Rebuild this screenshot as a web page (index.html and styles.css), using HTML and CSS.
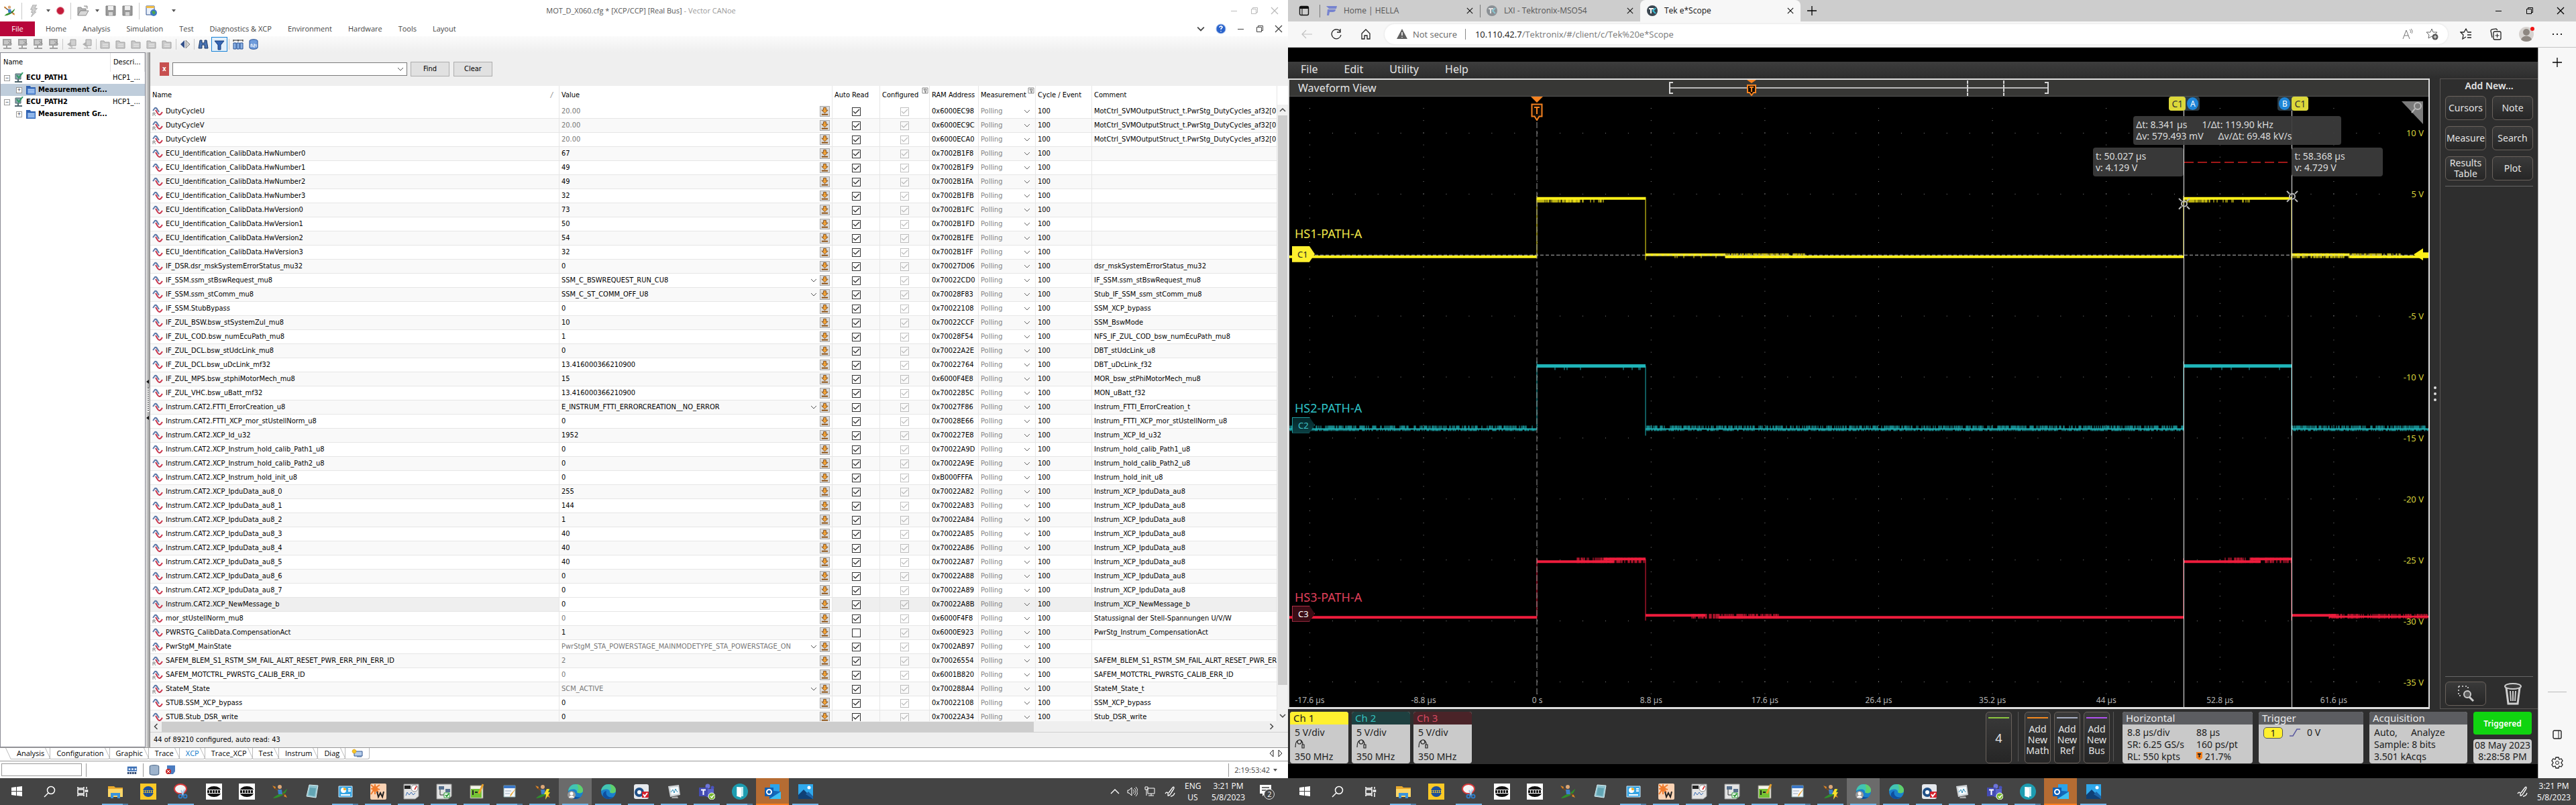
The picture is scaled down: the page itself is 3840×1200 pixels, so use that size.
FILE: index.html
```html
<!DOCTYPE html>
<html lang="en">
<head>
<meta charset="utf-8">
<title>CANoe and e*Scope desktop</title>
<link rel="stylesheet" href="styles.css">
</head>
<body>
<svg class="sprite" aria-hidden="true">
  <symbol id="kayak" viewBox="0 0 24 24"><path d="M2 22c2-3 7-5 11-7 4-1 7-5 10-7-1 5-5 9-10 11-4 2-8 3-11 3z" fill="#2f8f2a"/><path d="M2 5l20 14" stroke="#7a4a1e" stroke-width="2"/><path d="M1 3l5 2-1 3zM23 21l-5-2 2-3z" fill="#e08a2c"/><path d="M9 9h6l1 7h-6z" fill="#3a7fc8"/><circle cx="12" cy="5" r="3" fill="#dca777"/></symbol>
  <symbol id="bolt" viewBox="0 0 16 20"><path d="M6 0h6L9 6h4L8 12h3L3 20l3-7H3l2-5H2z" fill="#cfcfcf" stroke="#a8a8a8"/></symbol>
  <symbol id="open" viewBox="0 0 18 18"><path d="M1 16V4h5l1 2h6v3H5z" fill="#b4b4b4" stroke="#8c8c8c"/><path d="M1 16L5 9h12l-4 7zM10 2h5v4" fill="#d8d8d8" stroke="#8c8c8c"/></symbol>
  <symbol id="floppy" viewBox="0 0 16 16"><path d="M1 1h14v14H1z" fill="#9a9a9a" stroke="#7a7a7a"/><path d="M4 1h8v6H4z" fill="#eee"/><path d="M5 10h6v5H5z" fill="#d4d4d4"/></symbol>
  <symbol id="config" viewBox="0 0 18 18"><path d="M1 2h12v13H1z" fill="#e9f0fa" stroke="#2a4f8e"/><path d="M1 2h12v3H1z" fill="#f1bb44"/><circle cx="12" cy="12" r="5" fill="#3d78c6"/><path d="M9 10l4-1 2 3-3 3z" fill="#4ca74a"/></symbol>
  <symbol id="node" viewBox="0 0 16 16"><path d="M2 1h11v8H2zM7 9v4M2 14h12" fill="#c6c6c6" stroke="#a2a2a2" stroke-width="2"/><path d="M9 8l5-4M9 3l6 5" stroke="#8e8e8e"/></symbol>
  <symbol id="groupg" viewBox="0 0 16 16"><path d="M1 3h5l1 2h7v9H1z" fill="#c9c9c9" stroke="#a0a0a0"/><path d="M4 8h8M4 11h8" stroke="#efefef"/></symbol>
  <symbol id="sheet" viewBox="0 0 16 16"><path d="M6 1h8v9H6zM8 10v4M3 14h11" fill="#d0d0d0" stroke="#a0a0a0"/><path d="M1 8l6-4v8z" fill="#b0b0b0"/></symbol>
  <symbol id="split" viewBox="0 0 16 16"><path d="M7 2v12L1 8z" fill="#33508a"/><path d="M9 2v12l6-6z" fill="#d2d2d2" stroke="#888"/></symbol>
  <symbol id="find" viewBox="0 0 16 16"><path d="M3 2h3v4h4V2h3l2 12h-5V9H6v5H1z" fill="#4a74b4" stroke="#1c3763"/></symbol>
  <symbol id="filter" viewBox="0 0 16 16"><path d="M1 2h14l-5 6v7H6V8z" fill="#3566b4" stroke="#163a78"/></symbol>
  <symbol id="cols" viewBox="0 0 16 16"><path d="M1 1v3M8 1v3M15 1v3M1 2h14" stroke="#222"/><path d="M1 6h4v9H1zM6 6h4v9H6zM11 6h4v9h-4z" fill="#8db4e6" stroke="#244f94"/></symbol>
  <symbol id="a2l" viewBox="0 0 16 16"><path d="M2 3c0-3 12-3 12 0v10c0 3-12 3-12 0z" fill="#6f9cdc" stroke="#244f94"/><path d="M4 12V8h2v4M8 8h2v2H8v2h2M12 8v4" stroke="#fff" fill="none"/></symbol>
  <symbol id="ecu" viewBox="0 0 14 16"><path d="M2 2h8v8H2z" fill="#8aa5ae" stroke="#4d646d"/><path d="M6 10v4M1 14h11" stroke="#4d646d" stroke-width="2"/><path d="M4 4l3 4 6-8" fill="none" stroke="#2f9a63" stroke-width="2"/></symbol>
  <symbol id="folder" viewBox="0 0 14 14"><path d="M0 1h6l1 2h7v11H0z" fill="#2f62b2"/><path d="M2 5h11v8H2z" fill="#6f9ee0"/><path d="M3 7h9M3 10h9" stroke="#d7e6fb"/></symbol>
  <symbol id="wave" viewBox="0 0 16 14"><path d="M1 6l3-4c2-1 3 1 4 3l2 3" fill="none" stroke="#5b78a8" stroke-width="2"/><path d="M5 5l3 5c2 3 4 3 7-2" fill="none" stroke="#c8334a" stroke-width="2"/></symbol>
  <symbol id="waver" viewBox="0 0 16 14"><use href="#wave"/><path d="M1 14V9h2c2 0 2 2 0 2H1M3 11l2 3" fill="none" stroke="#888"/></symbol>
  <symbol id="dl" viewBox="0 0 14 14"><path d="M5 1h4v4h3l-5 5-5-5h3z" fill="#f4a53a" stroke="#7a4512"/><path d="M2 12h10" stroke="#8a4a08" stroke-width="2"/></symbol>
  <symbol id="fmark" viewBox="0 0 10 10"><path d="M1 1h8v8H1z" fill="#fff" stroke="#888"/><path d="M3 3h4L6 6v2H5V6z" fill="none" stroke="#666"/></symbol>
  <symbol id="min" viewBox="0 0 12 12"><path d="M1 6.500h9" stroke="currentColor"/></symbol>
  <symbol id="restore" viewBox="0 0 12 12"><path d="M1.500 3.500h7v7h-7zM3.500 3.500v-2h7v7h-2" fill="none" stroke="currentColor"/></symbol>
  <symbol id="close" viewBox="0 0 12 12"><path d="M1 1l10 10M11 1L1 11" fill="none" stroke="currentColor" stroke-width="1.300"/></symbol>
  <symbol id="chev" viewBox="0 0 10 10"><path d="M1 3l4 4 4-4" fill="none" stroke="currentColor" stroke-width="1.500"/></symbol>
  <symbol id="caret" viewBox="0 0 6 6"><path d="M0 1h6L3 5z" fill="currentColor"/></symbol>
  <symbol id="help" viewBox="0 0 16 16"><circle cx="8" cy="8" r="7" fill="#2a63cc" stroke="#9bb8e8"/><path d="M6 6c0-3 5-2 4 0-1 1-2 1-2 3M8 11v1" fill="none" stroke="#fff" stroke-width="1.600"/></symbol>
  <symbol id="capl" viewBox="0 0 18 14"><path d="M1 1h16v8H1z" fill="#3b6fb5"/><path d="M3 4h3v3H3zM8 4h3v3H8zM13 4h3v3h-3z" fill="#dfeaf8"/><path d="M1 12h16" stroke="#1c3763" stroke-width="3" stroke-dasharray="3 1"/></symbol>
  <symbol id="db" viewBox="0 0 12 12"><path d="M1 2c0-2 10-2 10 0v8c0 2-10 2-10 0z" fill="#9db3cc" stroke="#5e7896"/></symbol>
  <symbol id="err" viewBox="0 0 16 14"><path d="M3 0h12v9l-3 4H3z" fill="#4b7cc0"/><circle cx="5" cy="9" r="4" fill="#cc2a2a"/><path d="M3 7l4 4M7 7l-4 4" stroke="#fff"/></symbol>
  <symbol id="newdesk" viewBox="0 0 18 14"><path d="M4 4h12v7H4zM8 12h7" fill="#b6cdec" stroke="#33568f"/><circle cx="4" cy="4" r="3" fill="#f6c526" stroke="#d08a10" stroke-dasharray="1 1"/></symbol>
  <!-- browser -->
  <symbol id="tabs" viewBox="0 0 16 16"><rect x="1.500" y="1.500" width="13" height="13" rx="2" fill="none" stroke="#111" stroke-width="1.400"/><path d="M2 2h12v3H2z" fill="#111"/><path d="M5 5v9" stroke="#111"/></symbol>
  <symbol id="flogo" viewBox="0 0 16 16"><path d="M0 1h16l-1 4H4zM2 6h12c0 3-2 4-5 4H5l-1 5H1z" fill="#7784cf"/></symbol>
  <symbol id="tek" viewBox="0 0 16 16"><circle cx="8" cy="8" r="8" fill="#3b4650"/><path d="M3 5h7M6 5v7" stroke="#fff" stroke-width="2" fill="none"/><path d="M13 4L9 8l4 4" stroke="#36bcd4" stroke-width="2" fill="none"/></symbol>
  <symbol id="plus" viewBox="0 0 14 14"><path d="M7 0v14M0 7h14" stroke="currentColor" stroke-width="1.300"/></symbol>
  <symbol id="back" viewBox="0 0 16 16"><path d="M16 8H1M7 2L1 8l6 6" fill="none" stroke="#c0c0c0" stroke-width="1.200"/></symbol>
  <symbol id="reload" viewBox="0 0 16 16"><path d="M14 4A7 7 0 1 0 15 9M14 0v5H9" fill="none" stroke="#222" stroke-width="1.300"/></symbol>
  <symbol id="home" viewBox="0 0 16 16"><path d="M2 7l6-6 6 6v8h-4v-5H6v5H2z" fill="none" stroke="#222" stroke-width="1.300"/></symbol>
  <symbol id="warn" viewBox="0 0 16 16"><path d="M8 0l8 15H0z" fill="#606060"/><path d="M8 5v5M8 12v1" stroke="#fff" stroke-width="1.500"/></symbol>
  <symbol id="read" viewBox="0 0 16 16"><path d="M1 15L6 2l5 13M3 10h6M11 1c2 2 2 3 1 5M13 0c3 3 2 5 1 7" fill="none" stroke="#777"/></symbol>
  <symbol id="star" viewBox="0 0 18 18"><path d="M8 1l2 5h6l-4 4 1 5-5-3-5 3 1-5-4-4h6z" fill="none" stroke="#666"/><circle cx="13" cy="13" r="4.500" fill="#555"/><path d="M13 10.500v5M10.500 13h5" stroke="#fff"/></symbol>
  <symbol id="favs" viewBox="0 0 18 18"><path d="M11 5L9 1 6 6H1l4 4-1 6 5-3M11 6h6M11 10h6M11 14h6" fill="none" stroke="#222" stroke-width="1.300"/></symbol>
  <symbol id="coll" viewBox="0 0 18 18"><path d="M4 14L2 4c0-2 1-2 8-3l2 2" fill="none" stroke="#222" stroke-width="1.300"/><rect x="6" y="5" width="11" height="12" rx="2" fill="none" stroke="#222" stroke-width="1.300"/><path d="M11.500 8v6M8.500 11h6" stroke="#222"/></symbol>
  <symbol id="avatar" viewBox="0 0 24 24"><circle cx="11" cy="12" r="11" fill="#d6d2cf"/><circle cx="11" cy="9" r="5" fill="#8e8781"/><path d="M3 20c2-7 14-7 16 0-4 4-12 4-16 0z" fill="#8e8781"/><circle cx="20" cy="4" r="3" fill="#f01414"/></symbol>
  <symbol id="dots" viewBox="0 0 14 4"><path d="M0 1h2v2H0zM6 1h2v2H6zM12 1h2v2h-2z" fill="#222"/></symbol>
  <symbol id="panel" viewBox="0 0 14 14"><rect x="1" y="1" width="12" height="12" rx="2" fill="none" stroke="#222" stroke-width="1.400"/><path d="M9 1v12" stroke="#222"/></symbol>
  <symbol id="gear" viewBox="0 0 18 18"><path d="M7 1h4l1 3 3-1 2 3-2 3 2 3-2 3-3-1-1 3H7l-1-3-3 1-2-3 2-3-2-3 2-3 3 1z" fill="none" stroke="#222" stroke-width="1.300"/><circle cx="9" cy="9" r="2.500" fill="none" stroke="#222"/></symbol>
  <symbol id="probe" viewBox="0 0 16 14"><path d="M1 12c0-14 11-14 11-4M4 4c0-4 6-4 6 0s-6 4-6 0M11 8v5h3V8z" fill="none" stroke="#222" stroke-width="1.200"/></symbol>
  <symbol id="zoombox" viewBox="0 0 26 26"><path d="M2 2h14v8M2 2v14h6" fill="none" stroke="#b8b8b8" stroke-width="2" stroke-dasharray="2 3"/><circle cx="15" cy="14" r="5" fill="#5a5a5a" stroke="#ccc" stroke-width="2"/><path d="M18 18l6 6" stroke="#ccc" stroke-width="3"/></symbol>
  <symbol id="trash" viewBox="0 0 26 34"><path d="M3 8l3 24h14l3-24" fill="none" stroke="#cfcfcf" stroke-width="3"/><ellipse cx="13" cy="6" rx="12" ry="4" fill="#3a3a3a" stroke="#cfcfcf" stroke-width="2"/><path d="M9 13l1 15M13 13v15M17 13l-1 15" stroke="#cfcfcf" stroke-width="2"/></symbol>
  <symbol id="tmark" viewBox="0 0 18 36"><path d="M0 0h18l-9 9z" fill="#f58220"/><path d="M1.500 11.500h15v18h-4L9 35l-3.500-5.500h-4z" fill="#120b04" stroke="#f58220" stroke-width="2"/><path d="M5 16h8M9 16v10" stroke="#f58220" stroke-width="2"/></symbol>
  <!-- taskbar -->
  <symbol id="t-win" viewBox="0 0 24 24"><path d="M4 6l7-1v6H4zM12 5l8-1v7h-8zM4 12h7v6l-7-1zM12 12h8v7l-8-1z" fill="#fff"/></symbol>
  <symbol id="t-find" viewBox="0 0 24 24"><circle cx="14" cy="10" r="5.500" fill="none" stroke="#fff" stroke-width="1.500"/><path d="M10 14l-6 6" stroke="#fff" stroke-width="1.500"/></symbol>
  <symbol id="t-task" viewBox="0 0 24 24"><path d="M5 5v2h9V5M5 19v-2h9v2M5 9h9v6H5zM18 5v3M18 14v6M16.500 10h3v2h-3z" fill="none" stroke="#fff" stroke-width="1.500"/></symbol>
  <symbol id="t-files" viewBox="0 0 24 24"><path d="M1 4h9l2 2h11v14H1z" fill="#e8a92c"/><path d="M1 8h22v12H1z" fill="#fcd667"/><path d="M5 22v-8h14v8h-4v-4H9v4z" fill="#3a94dc"/></symbol>
  <symbol id="t-hella" viewBox="0 0 24 24"><path d="M0 0h24v24H0z" fill="#fbc926"/><circle cx="12" cy="12" r="8" fill="#1d4f9a"/><path d="M4 10h16v4H4z" fill="#fbc926"/><path d="M5 12h14" stroke="#1d4f9a" stroke-width="3" stroke-dasharray="2 1"/></symbol>
  <symbol id="t-snip" viewBox="0 0 24 24"><ellipse cx="11" cy="8" rx="9" ry="7" fill="#f4f4f4" stroke="#d9393a" stroke-width="2"/><path d="M12 10l4 9M17 9l-4 10" stroke="#a9c9e6" stroke-width="2"/><circle cx="11" cy="19" r="2.500" fill="none" stroke="#2f7ac4" stroke-width="2"/><circle cx="18" cy="19" r="2.500" fill="none" stroke="#2f7ac4" stroke-width="2"/></symbol>
  <symbol id="t-oval" viewBox="0 0 24 24"><path d="M0 0h24v24H0z" fill="#fff"/><ellipse cx="12" cy="12" rx="11" ry="8" fill="#111"/><path d="M1 9h22v6H1z" fill="#fff"/><path d="M2 12h20" stroke="#111" stroke-width="4" stroke-dasharray="3 1"/></symbol>
  <symbol id="t-note" viewBox="0 0 24 24"><path d="M7 2l13 1-3 18-14-2z" fill="#8fc4d0" stroke="#d9eef2"/><path d="M8 6l9 1-2 12-9-2z" fill="#63a5b4"/></symbol>
  <symbol id="t-panel" viewBox="0 0 24 24"><path d="M2 4h20v16H2z" fill="#36a5e4" stroke="#cbe8fa"/><circle cx="9" cy="10" r="4" fill="#fff"/><path d="M9 10V6a4 4 0 0 1 4 4z" fill="#f5b32c"/><path d="M5 17h14M16 8h4M16 11h4" stroke="#fff" stroke-width="2"/></symbol>
  <symbol id="t-w" viewBox="0 0 24 24"><rect width="24" height="24" rx="2" fill="#fbd3b4"/><path d="M7 7l-6 9M7 7L1 2M7 7l7-5M7 7l5 6M7 7l-6 1M7 7v9M7 7V1M7 7l7 2" stroke="#ef7b2c" stroke-width="2"/><circle cx="7" cy="8" r="4" fill="#ef7b2c"/><path d="M10 12l2 8 3-6 3 6 2-8" fill="none" stroke="#222" stroke-width="2"/></symbol>
  <symbol id="t-meas" viewBox="0 0 24 24"><path d="M1 1h22v18l-5 4H1z" fill="#e4e4e4" stroke="#999"/><path d="M2 3h9v5H2z" fill="#222"/><circle cx="17" cy="7" r="5" fill="#fff" stroke="#888"/><path d="M17 9l3-5" stroke="#d22" stroke-width="1.500"/><path d="M4 18l2-5 3 4 3-4 3 4 3-3" fill="none" stroke="#3b6fb5"/></symbol>
  <symbol id="t-flow" viewBox="0 0 24 24"><path d="M1 1h22v18l-5 4H1z" fill="#e4e4e4" stroke="#999"/><path d="M4 4h8v5H4zM14 8h7v5h-7z" fill="#56708e"/><path d="M6 9v8h6" fill="none" stroke="#333"/><path d="M12 14h8v7h-8z" fill="#fff" stroke="#2a9a32"/><path d="M14 17l2 2 3-4" fill="none" stroke="#2a9a32" stroke-width="2"/></symbol>
  <symbol id="t-npp" viewBox="0 0 24 24"><path d="M2 3h19v19H2z" fill="#f4f4ea" stroke="#8a8a7a"/><path d="M3 8h16v13H3z" fill="#74c234"/><path d="M6 10v7M9 13h4" stroke="#222" stroke-width="2"/><path d="M21 1l-6 14" stroke="#e8a02c" stroke-width="3"/></symbol>
  <symbol id="t-pad" viewBox="0 0 24 24"><path d="M3 3h17v17H3z" fill="#f2f6fb" stroke="#8aa"/><path d="M3 3h17v4H3z" fill="#3c78c8"/><path d="M5 11h9M5 15h7" stroke="#9ab"/><path d="M22 6l-8 12-2 2 1-4z" fill="#eba52c"/></symbol>
  <symbol id="t-edgeu" viewBox="0 0 24 24"><use href="#t-edge"/><circle cx="6" cy="17" r="6" fill="#9a9a9a"/><circle cx="6" cy="15" r="2.500" fill="#fff"/><path d="M2 21c1-4 7-4 8 0z" fill="#fff"/></symbol>
  <symbol id="t-edge" viewBox="0 0 24 24"><circle cx="12" cy="12" r="11" fill="#1b80cc"/><path d="M1 11C2 4 7 1 12 1c7 0 11 5 11 9 0 5-6 5-9 3 1-4-6-7-13-2z" fill="#43c5b1"/><path d="M14 1c6 1 9 5 9 9 0 5-6 5-9 3 3-2 2-8 0-12z" fill="#5fd06c"/><path d="M9 11c-2 6 3 11 10 9-4 4-12 4-15-1-1-4 1-7 5-8z" fill="#0f4f9e"/></symbol>
  <symbol id="t-gauge" viewBox="0 0 24 24"><rect x="1" y="1" width="22" height="22" rx="3" fill="#e6e9ed"/><circle cx="9" cy="13" r="7" fill="#1f4f86"/><circle cx="9" cy="13" r="3" fill="#fff"/><path d="M13 12h10v9H13z" fill="#d4202c"/><path d="M15 16l2 3 4-5" fill="none" stroke="#fff" stroke-width="2"/></symbol>
  <symbol id="t-mon" viewBox="0 0 24 24"><path d="M3 4l16-2 2 15-15 3z" fill="#cfd3d6"/><path d="M6 6l12-1 1 10-11 2z" fill="#f4fafd"/><path d="M7 13l3-4 2 5 2-6 3 5" fill="none" stroke="#2c8ab4"/><path d="M9 20l8-1 1 3H8z" fill="#aaa"/></symbol>
  <symbol id="t-teams" viewBox="0 0 24 24"><circle cx="13" cy="4" r="3.500" fill="#6c74d8"/><circle cx="20" cy="6" r="2.500" fill="#4a53bc"/><path d="M9 8h13v9c-3 5-11 5-13 0z" fill="#5b64cc"/><path d="M0 6h13v13H0z" fill="#444cb4"/><path d="M3 9.500h7M6.500 9.500V17" stroke="#fff" stroke-width="2"/><circle cx="19" cy="19" r="5" fill="#78b82c" stroke="#fff"/><path d="M17 19l2 2 3-4" fill="none" stroke="#fff" stroke-width="1.500"/></symbol>
  <symbol id="t-door" viewBox="0 0 24 24"><circle cx="12" cy="12" r="12" fill="#1d9cb0"/><path d="M7 5h10v14H7z" fill="#bfeaf0"/><path d="M8 5l6 2v14l-6-2z" fill="#fff"/></symbol>
  <symbol id="t-outlook" viewBox="0 0 24 24"><path d="M8 1h14v12H8z" fill="#2aa3ea"/><path d="M6 10l18 2v11H7z" fill="#1468b8"/><path d="M7 23l17-11v11z" fill="#3cc0f4"/><path d="M0 6h13v13H0z" fill="#0f5fb4"/><circle cx="6.500" cy="12.500" r="3.500" fill="none" stroke="#fff" stroke-width="2"/></symbol>
  <symbol id="t-photo" viewBox="0 0 24 24"><path d="M1 1h22v22H1z" fill="#2fa8ec"/><path d="M1 17l8-8 14 14H1z" fill="#0f4076"/><path d="M12 16l4-4 7 7v4z" fill="#1a63a8"/><circle cx="17" cy="6" r="2.500" fill="#fff"/></symbol>
  <symbol id="t-canoe" viewBox="0 0 24 24"><use href="#kayak"/><path d="M18 8h4l-2 5h3l-7 11 1-8h-3z" fill="#f8e02c"/></symbol>
  <symbol id="y-up" viewBox="0 0 16 16"><path d="M2 11l6-6 6 6" fill="none" stroke="#fff" stroke-width="1.400"/></symbol>
  <symbol id="y-vol" viewBox="0 0 16 16"><path d="M1 6h2l4-4v12l-4-4H1zM9 5c2 2 2 4 0 6M11 3c3 3 3 7 0 10M13 1c4 4 4 10 0 14" fill="none" stroke="#fff"/></symbol>
  <symbol id="y-net" viewBox="0 0 16 16"><path d="M5 3h10v8H5zM10 11v3M6 14h8M1 1h4v4H1zM3 5v9" fill="none" stroke="#fff"/></symbol>
  <symbol id="y-pen" viewBox="0 0 16 16"><path d="M1 11c3-4 5-1 4 3 3 1 5-5 8-9 2-3 1-5-1-3L6 10M9 15c3 0 5-2 6-5" fill="none" stroke="#fff" stroke-width="1.300"/></symbol>
  <symbol id="y-note" viewBox="0 0 24 24"><path d="M2 2h17v13h-9l-4 4v-4H2z" fill="#fff"/><path d="M5 6h11M5 10h11" stroke="#444" stroke-width="1.500"/><circle cx="16" cy="16" r="7.500" fill="#444" stroke="#ddd"/></symbol>
</svg>

<div class="desktop">
<section class="screen">
  <div class="canoe">
    <header class="titlebar">
      <div class="quick">
        <svg class="i18"><use href="#kayak"/></svg><i class="sep"></i>
        <svg class="i18"><use href="#bolt"/></svg><svg class="i6"><use href="#caret"/></svg>
        <i class="rec"></i><i class="sep"></i>
        <svg class="i18"><use href="#open"/></svg><svg class="i6"><use href="#caret"/></svg>
        <svg class="i16"><use href="#floppy"/></svg><svg class="i16"><use href="#floppy"/></svg><i class="sep"></i>
        <svg class="i18"><use href="#config"/></svg><svg class="i6 last"><use href="#caret"/></svg>
      </div>
      <h1>MOT_D_X060.cfg * [XCP/CCP] [Real Bus] <span>- Vector CANoe</span></h1>
      <div class="winbtns dim">
        <button aria-label="Minimize"><svg><use href="#min"/></svg></button><button aria-label="Restore"><svg><use href="#restore"/></svg></button><button aria-label="Close"><svg><use href="#close"/></svg></button>
      </div>
    </header>
    <nav class="ribbon">
      <button class="file">File</button>
      <button>Home</button><button>Analysis</button><button>Simulation</button><button>Test</button><button>Diagnostics &amp; XCP</button><button>Environment</button><button>Hardware</button><button>Tools</button><button>Layout</button>
      <div class="winbtns small">
        <button aria-label="Collapse ribbon"><svg><use href="#chev"/></svg></button><button aria-label="Help"><svg class="i16"><use href="#help"/></svg></button><button aria-label="Minimize"><svg><use href="#min"/></svg></button><button aria-label="Restore"><svg><use href="#restore"/></svg></button><button aria-label="Close"><svg><use href="#close"/></svg></button>
      </div>
    </nav>
    <div class="tools">
      <svg><use href="#node"/></svg><svg><use href="#node"/></svg><svg><use href="#node"/></svg><svg><use href="#node"/></svg><i class="sep"></i>
      <svg><use href="#sheet"/></svg><svg><use href="#sheet"/></svg><i class="sep"></i>
      <svg><use href="#groupg"/></svg><svg><use href="#groupg"/></svg><svg><use href="#groupg"/></svg><svg><use href="#groupg"/></svg><svg><use href="#groupg"/></svg><i class="sep"></i>
      <svg><use href="#split"/></svg><i class="sep"></i>
      <svg><use href="#find"/></svg><button class="on" aria-label="Filter"><svg><use href="#filter"/></svg></button><i class="sep"></i>
      <svg><use href="#cols"/></svg><svg><use href="#a2l"/></svg>
    </div>
    <div class="work">
      <aside class="tree">
        <div class="treehead"><span>Name</span><span>Descri...</span></div>
        <div class="node"><i class="box">−</i><svg><use href="#ecu"/></svg><b>ECU_PATH1</b><span>HCP1_...</span></div>
        <div class="node child sel"><i class="box">+</i><svg><use href="#folder"/></svg><b>Measurement Gr...</b></div>
        <div class="node"><i class="box">−</i><svg><use href="#ecu"/></svg><b>ECU_PATH2</b><span>HCP1_...</span></div>
        <div class="node child"><i class="box">+</i><svg><use href="#folder"/></svg><b>Measurement Gr...</b></div>
      </aside>
      <div class="splitter"><svg viewBox="0 0 7 60"><path d="M5 0v6L1 3zM5 54v6l-4-3z" fill="#111"/><path d="M4 12v36" stroke="#fff" stroke-width="3"/><path d="M4 12v36" stroke="#222" stroke-width="2" stroke-dasharray="1 2"/></svg></div>
      <main class="signals">
        <form class="findbar">
          <button type="button" class="x" aria-label="Close search">x</button>
          <select aria-label="Search text"><option></option></select>
          <button type="button">Find</button><button type="button">Clear</button>
        </form>
        <div class="gridwrap">
          <div class="tablebox">
          <table>
            <colgroup><col><col class="c-val"><col class="c-auto"><col class="c-conf"><col class="c-ram"><col class="c-meas"><col class="c-cyc"><col class="c-com"></colgroup>
            <thead><tr><th>Name<em>/</em></th><th>Value</th><th>Auto Read</th><th>Configured<svg><use href="#fmark"/></svg></th><th>RAM Address</th><th>Measurement<svg><use href="#fmark"/></svg></th><th>Cycle / Event</th><th>Comment</th></tr></thead>
            <tbody id="rows"></tbody>
          </table>
          </div>
          <div class="vscroll"><svg><use href="#chev"/></svg><i></i><svg><use href="#chev"/></svg></div>
        </div>
        <div class="hscroll"><svg><use href="#chev"/></svg><div><i></i></div><svg><use href="#chev"/></svg></div>
        <div class="count">44 of 89210 configured, auto read: 43</div>
      </main>
    </div>
    <nav class="desks">
      <button>Analysis</button><button>Configuration</button><button>Graphic</button><button>Trace</button><button class="cur">XCP</button><button>Trace_XCP</button><button>Test</button><button>Instrum</button><button>Diag</button><button aria-label="New desktop"><svg><use href="#newdesk"/></svg></button>
      <span class="pager"><svg viewBox="0 0 20 10"><path d="M6 0v10L1 5zM14 0v10l5-5z" fill="none" stroke="#222"/></svg></span>
    </nav>
    <footer class="status">
      <input type="text" aria-label="Status"><i class="sep"></i>
      <svg class="capl"><use href="#capl"/></svg><i class="sep"></i>
      <svg><use href="#db"/></svg><svg><use href="#err"/></svg>
      <span class="clock">2:19:53:42 <svg class="i6"><use href="#caret"/></svg></span>
    </footer>
  </div>
  <footer class="taskbar"><div class="apps"></div>
    <div class="tray"><svg><use href="#y-up"/></svg><svg><use href="#y-vol"/></svg><svg><use href="#y-net"/></svg><svg class="pen"><use href="#y-pen"/></svg>
      <p class="lang">ENG<br>US</p><p>3:21 PM<br>5/8/2023</p><span class="note"><svg><use href="#y-note"/></svg><b>2</b></span></div>
  </footer>
</section>

<section class="screen">
  <div class="browser">
    <header class="tabstrip">
      <svg class="i16 tabmenu"><use href="#tabs"/></svg>
      <div class="tab"><svg class="i16"><use href="#flogo"/></svg><span>Home | HELLA</span><button aria-label="Close tab"><svg><use href="#close"/></svg></button></div>
      <div class="tab faded"><svg class="i16"><use href="#tek"/></svg><span>LXI - Tektronix-MSO54</span><button aria-label="Close tab"><svg><use href="#close"/></svg></button></div>
      <div class="tab active"><svg class="i16"><use href="#tek"/></svg><span>Tek e*Scope</span><button aria-label="Close tab"><svg><use href="#close"/></svg></button></div>
      <button class="newtab" aria-label="New tab"><svg><use href="#plus"/></svg></button>
      <div class="winbtns wide">
        <button aria-label="Minimize"><svg><use href="#min"/></svg></button><button aria-label="Restore"><svg><use href="#restore"/></svg></button><button aria-label="Close"><svg><use href="#close"/></svg></button>
      </div>
    </header>
    <div class="navbar">
      <button aria-label="Back"><svg><use href="#back"/></svg></button><button aria-label="Reload"><svg><use href="#reload"/></svg></button><button aria-label="Home"><svg><use href="#home"/></svg></button>
      <div class="address"><svg><use href="#warn"/></svg><span class="ns">Not secure</span><a href="#"><b>10.110.42.7</b>/Tektronix/#/client/c/Tek%20e*Scope</a><svg class="push"><use href="#read"/></svg><svg class="s18"><use href="#star"/></svg></div>
      <div class="acts"><svg><use href="#favs"/></svg><svg><use href="#coll"/></svg><svg class="av"><use href="#avatar"/></svg><svg class="dt"><use href="#dots"/></svg></div>
    </div>
    <div class="body">
      <div class="page">
        <nav class="menu"><button>File</button><button>Edit</button><button>Utility</button><button>Help</button></nav>
        <div class="stage">
          <div class="view">
            <div class="viewhead"><h2>Waveform View</h2>
              <svg class="over" viewBox="0 0 566 24" preserveAspectRatio="none"><path d="M0 12h566" stroke="#b9b9b9" stroke-width="2"/><path d="M6 4H1v16h5M560 4h5v16h-5" fill="none" stroke="#d6d6d6" stroke-width="2"/><path d="M445 1v23M499 1v23" stroke="#d6d6d6" stroke-width="2" stroke-dasharray="5 1"/><path d="M116 0h14l-7 5z" fill="#f58220"/><path d="M117 8h12v11h-3l-3 4-3-4h-3z" fill="#120b04" stroke="#f58220" stroke-width="2"/><path d="M120 11h6M123 11v7" stroke="#f58220" stroke-width="2"/></svg>
            </div>
            <div class="plot">
              <svg id="scope" viewBox="0 0 1698 911" preserveAspectRatio="none"></svg>
              <svg class="tmark"><use href="#tmark"/></svg>
              <span class="name n1">HS1-PATH-A</span><span class="name n2">HS2-PATH-A</span><span class="name n3">HS3-PATH-A</span>
              <span class="badge b1">C1</span><span class="badge b2">C2</span><span class="badge b3">C3</span>
              <div class="flag fa"><b>C1</b><i>A</i></div><div class="flag fb"><i>B</i><b>C1</b></div>
              <div class="readout delta"><span>Δt: 8.341 µs</span><span>1/Δt: 119.90 kHz</span><br><span>Δv: 579.493 mV</span><span>Δv/Δt: 69.48 kV/s</span></div>
              <div class="readout ra">t: 50.027 µs<br>v: 4.129 V</div>
              <div class="readout rb">t: 58.368 µs<br>v: 4.729 V</div>
              <svg class="lens" viewBox="0 0 32 34"><path d="M0 0h32v34z" fill="#7b7b7b"/><circle cx="24" cy="7" r="5" fill="none" stroke="#bbb" stroke-width="2"/><path d="M20 11l-5 6" stroke="#bbb" stroke-width="2"/></svg>
            </div>
          </div>
          <div class="grip"><i></i><i></i><i></i></div>
          <aside class="addnew">
            <h3>Add New...</h3>
            <div class="btns"><button>Cursors</button><button>Note</button><button>Measure</button><button>Search</button><button>Results Table</button><button>Plot</button></div>
            <div class="foot"><button aria-label="Draw a box"><svg><use href="#zoombox"/></svg></button><button class="bare" aria-label="Trash"><svg class="tr"><use href="#trash"/></svg></button></div>
          </aside>
        </div>
        <div class="settings">
          <section class="ch c1"><h4>Ch 1</h4><p>5 V/div</p><svg><use href="#probe"/></svg><p>350 MHz</p></section>
          <section class="ch c2"><h4>Ch 2</h4><p>5 V/div</p><svg><use href="#probe"/></svg><p>350 MHz</p></section>
          <section class="ch c3"><h4>Ch 3</h4><p>5 V/div</p><svg><use href="#probe"/></svg><p>350 MHz</p></section>
          <button class="add four">4</button><i class="bar"></i>
          <button class="add math">Add New Math</button><button class="add ref">Add New Ref</button><button class="add bus">Add New Bus</button><i class="bar"></i>
          <section class="info hor"><h4>Horizontal</h4><dl><dd>8.8 µs/div</dd><dd>88 µs</dd><dd>SR: 6.25 GS/s</dd><dd>160 ps/pt</dd><dd>RL: 550 kpts</dd><dd><svg viewBox="0 0 9 12"><path d="M0 0h9v9l-4 3-5-3z" fill="#f58220"/><path d="M2 3h5M4.500 3v5" stroke="#222" stroke-width="2"/></svg> 21.7%</dd></dl></section>
          <section class="info trg"><h4>Trigger</h4><p><b>1</b><svg viewBox="0 0 16 12"><path d="M0 11h5L11 1h5" fill="none" stroke="#5b5aa0" stroke-width="1.500"/></svg>0 V</p></section>
          <section class="info acq"><h4>Acquisition</h4><p><span>Auto,</span>Analyze<br>Sample: 8 bits<br>3.501 kAcqs</p></section>
          <div class="state"><button>Triggered</button><p>08 May 2023<br>8:28:58 PM</p></div>
        </div>
      </div>
      <aside class="side"><button aria-label="Add"><svg><use href="#plus"/></svg></button><hr><button aria-label="Hide sidebar"><svg><use href="#panel"/></svg></button><button aria-label="Settings"><svg class="i18"><use href="#gear"/></svg></button></aside>
    </div>
  </div>
  <footer class="taskbar"><div class="apps"></div>
    <div class="tray"><svg class="pen"><use href="#y-pen"/></svg><p>3:21 PM<br>5/8/2023</p></div>
  </footer>
</section>
</div>
<script src="app.js"></script>
</body>
</html>
```
FILE: styles.css
```css
* { box-sizing: border-box; }
body { margin: 0; font: 11px/14px "DejaVu Sans Condensed", "DejaVu Sans", sans-serif; color: #000; background: #000; }
button { font: inherit; color: inherit; border: 0; background: none; padding: 0; margin: 0; }
h1, h2, h3, h4, p, dl, dd { margin: 0; font: inherit; }
svg { display: block; width: 16px; height: 16px; flex: none; }
.sprite { position: absolute; width: 0; height: 0; }
.i16 { width: 16px; height: 16px; }
.i18 { width: 18px; height: 18px; }
.i6 { width: 6px; height: 6px; color: #555; }

.desktop { display: grid; grid-template-columns: minmax(0, 1fr) minmax(0, 1fr); height: 100vh; }
.screen { display: flex; flex-direction: column; min-height: 0; }

/* CANoe window */
.canoe { flex: 1; min-height: 0; display: flex; flex-direction: column; background: #fff; }
.titlebar { display: flex; align-items: center; height: 32px; font: 11px/16px "Open Sans", sans-serif; }
.quick { display: flex; align-items: center; gap: 9px; padding-left: 5px; flex: 1; }
.quick .last { margin-left: 12px; }
.sep { width: 1px; height: 25px; background: #c9c9c9; }
.rec { width: 12px; height: 12px; border-radius: 50%; background: #c41a3a; border: 1px solid #e08a98; }
.titlebar h1 { color: #555; }
.titlebar h1 span { color: #999; }
.winbtns { flex: 1; display: flex; justify-content: flex-end; padding-right: 14px; gap: 18px; }
.winbtns svg { width: 12px; height: 12px; }
.dim { color: #bbb; }
.winbtns.small { gap: 16px; padding-right: 8px; align-items: center; }
.winbtns.small .i16 { width: 16px; height: 16px; }
.ribbon { display: flex; align-items: center; height: 22px; font: 11px/16px "Open Sans", sans-serif; color: #444; }
.ribbon > button { padding: 0 12px; height: 22px; }
.ribbon > button.file { width: 52px; background: #b8063a; color: #fff; margin-right: 4px; }
.tools { display: flex; align-items: center; gap: 7px; height: 24px; padding-left: 3px; background: linear-gradient(#fbfbfb, #efefef); }
.tools .sep { height: 16px; margin: 0 -2px; }
.tools .on { border: 1px solid #1883d7; background: #e3f0fb; padding: 3px 3px; height: 22px; margin: 0 -3px; }
.work { flex: 1; min-height: 0; display: flex; background: #efefef; }
.tree { width: 217px; background: #fff; border: 1px solid #8a8a94; }
.treehead { display: grid; grid-template-columns: 164px 1fr; height: 28px; line-height: 28px; }
.treehead span { padding-left: 4px; border-right: 1px solid #e4e4e4; white-space: nowrap; overflow: hidden; }
.node { display: flex; align-items: center; height: 18px; padding-left: 5px; }
.node svg { width: 14px; height: 16px; margin: 0 4px 0 6px; }
.node b { flex: 1; white-space: nowrap; }
.node span { width: 48px; white-space: nowrap; }
.node.child { padding-left: 23px; }
.node.sel { background: #bfcddb; }
.box { width: 9px; height: 9px; border: 1px solid #999; font: 9px/7px "Liberation Sans", sans-serif; text-align: center; background: #fff; color: #234; }
.splitter { width: 7px; display: flex; align-items: center; background: linear-gradient(90deg, #e8e8e8, #8c8c8c); }
.splitter svg { width: 7px; height: 60px; }
.signals { flex: 1; min-width: 0; display: flex; flex-direction: column; }
.findbar { display: flex; align-items: center; height: 50px; padding: 0 0 0 14px; }
.findbar .x { width: 14px; height: 20px; background: #c75050; color: #fff; font-weight: bold; font-size: 10px; margin-right: 5px; border: 0; }
.findbar select { width: 350px; height: 20px; margin-right: 5px; }
.findbar button { width: 58px; height: 22px; background: #e1e1e1; border: 1px solid #adadad; margin-right: 6px; }
select { appearance: none; font: inherit; color: inherit; opacity: 1; margin: 0; padding: 0; border: 1px solid #7a7a7a; border-radius: 0; background: #fff url("data:image/svg+xml,%3Csvg xmlns='http://www.w3.org/2000/svg' viewBox='0 0 10 10'%3E%3Cpath d='M1 3l4 4 4-4' fill='none' stroke='%23555'/%3E%3C/svg%3E") right 4px center / 10px 10px no-repeat; }
.gridwrap { flex: 1; min-height: 0; display: flex; background: #fff; }
.tablebox { flex: 1; min-width: 0; overflow: hidden; }
table { width: 100%; table-layout: fixed; border-collapse: separate; border-spacing: 0; }
.c-val { width: 407px; } .c-auto { width: 71px; } .c-conf { width: 74px; } .c-ram { width: 73px; } .c-meas { width: 85px; } .c-cyc { width: 84px; } .c-com { width: 276px; }
th, td { text-align: left; font-weight: normal; white-space: nowrap; overflow: hidden; border-right: 1px solid #e6e6e6; padding: 0 3px; }
th { height: 28px; position: relative; }
th em { float: right; color: #888; padding-right: 6px; }
th svg { position: absolute; right: 1px; top: 2px; width: 10px; height: 10px; }
td { height: 21px; border-bottom: 1px solid #e6e6e6; }
tbody tr:nth-child(even) { background: #f9f9f9; }
tbody tr.hot { background: #efefef; }
tr.hot td:nth-child(2) { background: #fff; }
td > div { display: flex; align-items: center; }
td .wv { width: 16px; height: 14px; margin-right: 4px; }
.ro { color: #777; }
.val { flex: 1; }
td select { height: 18px; border: 0; background-color: transparent; }
.poll { width: 100%; color: #777; opacity: .9; }
.dl { width: 15px; height: 16px; background: #dcdcdc; border: 1px solid #a8a8a8; }
.dl svg { width: 13px; height: 14px; }
td.mid { text-align: center; line-height: 1px; }
input[type=checkbox] { appearance: none; width: 13px; height: 13px; margin: 0; border: 1px solid #333; background-color: #fff; vertical-align: middle; }
input[type=checkbox]:checked { background-image: url("data:image/svg+xml,%3Csvg xmlns='http://www.w3.org/2000/svg' viewBox='0 0 11 11'%3E%3Cpath d='M1 5l3 3 6-6' fill='none' stroke='%23222' stroke-width='1.200'/%3E%3C/svg%3E"); }
input[type=checkbox]:disabled { opacity: .3; }
.vscroll { width: 16px; margin-top: 28px; background: #f0f0f0; display: flex; flex-direction: column; align-items: center; color: #444; }
.vscroll i { width: 14px; flex: 1; background: #cdcdcd; margin-bottom: 38px; }
.vscroll svg { width: 10px; height: 16px; }
.vscroll svg:first-child { transform: rotate(180deg); }
.hscroll { height: 17px; display: flex; align-items: center; color: #444; border-bottom: 1px solid #d0d0d0; padding-right: 16px; }
.hscroll svg { width: 17px; height: 10px; transform: rotate(90deg); }
.hscroll svg:last-child { transform: rotate(-90deg); }
.hscroll div { flex: 1; height: 15px; }
.hscroll i { display: block; width: 79%; height: 15px; background: #cdcdcd; }
.count { height: 22px; padding-left: 5px; font: 11px/22px "DejaVu Sans Condensed", sans-serif; }
.desks { display: flex; height: 20px; border-top: 1px solid #999; padding-left: 16px; font: 11px/16px "Open Sans", sans-serif; }
.desks button { position: relative; height: 17px; padding: 0 8px 0 9px; border-right: 1px solid #bbb; border-bottom: 1px solid #bbb; border-radius: 0 0 3px 0; }
.desks button::before { content: ""; position: absolute; left: -4px; top: 0; width: 6px; height: 17px; border-left: 1px solid #bbb; transform: skewX(25deg); }
.desks .cur { color: #0a78c8; }
.desks svg { width: 18px; height: 14px; }
.pager { margin-left: auto; padding: 3px 8px; }
.pager svg { width: 20px; height: 10px; }
.status { display: flex; align-items: center; height: 26px; border-top: 1px solid #999; padding-left: 2px; gap: 8px; }
.status input { width: 120px; height: 19px; border: 1px solid #999; padding: 0; margin-right: -2px; }
.status .sep { background: #999; height: 20px; }
.status .capl { margin-left: 52px; }
.clock { margin-left: auto; display: flex; align-items: center; gap: 5px; border-left: 1px solid #999; height: 20px; padding: 0 16px 0 8px; color: #444; font: 11px/20px "Open Sans", sans-serif; }

/* Task bar */
.taskbar { height: 40px; display: flex; background: #444; color: #fff; }
.apps { display: flex; }
.app { width: 49px; height: 40px; display: grid; place-items: center; position: relative; }
.app svg { width: 24px; height: 24px; }
.app.run::after { content: ""; position: absolute; left: 5px; right: 5px; bottom: 0; height: 2px; background: #76b9ed; }
.app.many::after { background: linear-gradient(90deg, #76b9ed 80%, #4f7ea4 80%); }
.app.focus { background: #6b6b6b; }
.app.alert { background: #b56c33; }
.app.alert::after { left: 0; right: 0; background: #ff7f1f; }
.tray { margin-left: auto; display: flex; align-items: center; gap: 10px; padding-right: 8px; font: 12px/17px "Open Sans", sans-serif; text-align: center; }
.tray .pen { margin: 0 4px; }
.tray .lang { width: 24px; margin-right: 6px; }
.note { position: relative; margin: 0 12px 0 10px; }
.note svg { width: 24px; height: 24px; }
.note b { position: absolute; left: 12px; top: 8px; width: 9px; font: 11px/16px "Open Sans", sans-serif; }

/* Browser */
.browser { flex: 1; min-height: 0; display: flex; flex-direction: column; background: #f7f7f7; font: 12px/16px "Open Sans", sans-serif; }
.tabstrip { height: 32px; display: flex; align-items: center; background: #cdcdcd; }
.tabmenu { margin: 0 15px 0 16px; }
.tab { width: 239px; height: 32px; display: flex; align-items: center; gap: 10px; padding: 0 10px; color: #555; position: relative; }
.tab::before { content: ""; position: absolute; left: 0; top: 7px; height: 19px; width: 1px; background: #777; }
.tab.active::before { display: none; }
.tab.active { background: #f7f7f7; color: #111; border-radius: 8px 8px 0 0; }
.tab span { flex: 1; }
.faded > svg { opacity: .45; }
.tab button svg { width: 10px; height: 10px; color: #111; }
.newtab svg { width: 14px; height: 14px; margin-left: 10px; }
.wide { gap: 34px; padding-right: 17px; }
.navbar { height: 39px; display: flex; align-items: center; border-bottom: 1px solid #c4c4c4; padding-left: 20px; gap: 28px; }
.address { flex: 1; height: 30px; background: #fff; border-radius: 15px; display: flex; align-items: center; padding: 0 14px 0 18px; margin-left: -8px; box-shadow: 0 0 3px #ddd; font: 13px/20px "Open Sans", sans-serif; color: #666; }
.address .ns { margin: 0 14px 0 8px; padding-right: 12px; border-right: 1px solid #888; line-height: 16px; }
.address a { color: #777; text-decoration: none; }
.address b { color: #111; font-weight: normal; }
.address .push { margin-left: auto; margin-right: 20px; }
.address .s18 { width: 18px; height: 18px; }
.acts { display: flex; align-items: center; gap: 26px; padding-right: 21px; margin-left: -10px; }
.acts svg { width: 18px; height: 18px; }
.acts .av { width: 24px; height: 24px; }
.acts .dt { width: 14px; height: 4px; }
.body { flex: 1; min-height: 0; display: flex; }
.side { width: 56px; display: flex; flex-direction: column; align-items: center; padding: 15px 0 14px; gap: 26px; }
.side hr { width: 28px; border: 0; border-top: 1px solid #bbb; margin: auto 0 30px; }
.side > button svg { width: 14px; height: 14px; }
.side > button svg.i18 { width: 18px; height: 18px; }

/* Oscilloscope page */
.page { flex: 1; min-width: 0; display: flex; flex-direction: column; padding: 21px 0; background: #000; font: 14px/17px "Noto Sans", sans-serif; color: #e4e4e4; border-right: 1px solid #aaa; }
.menu { height: 25px; display: flex; gap: 39px; padding-left: 19px; background: linear-gradient(#3d3d3d, #2d2d2d); font-size: 16px; line-height: 20px; }
.menu button { height: 22px; line-height: 20px; }
.stage { flex: 1; min-height: 0; display: flex; background: #2e2e2e; }
.view { flex: 1; min-width: 0; display: flex; flex-direction: column; border: 2px solid #dedede; border-bottom-width: 3px; }
.viewhead { height: 25px; display: grid; grid-template-columns: 1fr 1fr 1fr; background: #373735; border-bottom: 1px solid #555; }
.viewhead h2 { padding-left: 13px; font-size: 16px; line-height: 25px; }
.over { width: 100%; height: 24px; }
.plot { flex: 1; min-height: 0; position: relative; background: #000; overflow: hidden; }
#scope { position: absolute; inset: 0; width: 100%; height: 100%; }
.plot > span, .plot > div, .lens, .tmark { position: absolute; white-space: nowrap; }
.tmark { width: 18px; height: 36px; left: 21.730%; top: 0; margin-left: -9px; }
.name { left: 8px; font-size: 18px; line-height: 24px; transform: translateY(-50%); }
.n1 { top: 22.400%; color: #f0e84a; } .n2 { top: 51%; color: #2fc3c7; } .n3 { top: 82%; color: #e0405c; }
.badge { left: 4px; width: 34px; height: 24px; padding-left: 8px; font-size: 13px; line-height: 24px; transform: translateY(-50%); clip-path: polygon(0 0, 76% 0, 100% 50%, 76% 100%, 0 100%); }
.b1 { top: 25.800%; background: #fff02f; color: #222; } .b2 { top: 53.800%; background: linear-gradient(#04272a, #0b3e42); color: #3fc3c7; border: 1px solid #1f9ca0; line-height: 22px; } .b3 { top: 84.700%; background: #3a0c14; border: 1px solid #b03048; color: #fff; line-height: 22px; }
.flag { top: 0; display: flex; font-size: 14px; line-height: 21px; background: #2d3b44; border-radius: 4px; }
.flag b { width: 25px; background: #dcd83a; color: #333; font-weight: normal; border-radius: 4px; text-align: center; }
.flag i { width: 17px; height: 19px; margin: 1px 2px; border-radius: 50%; background: #1f86d8; color: #fff; font-style: normal; text-align: center; font-size: 12px; line-height: 19px; }
.fa { left: 78.700%; transform: translateX(-25px); } .fb { left: 88.010%; transform: translateX(-21px); }
.readout { background: #3b3b3bf0; border-radius: 4px; height: 43px; padding: 4px 4px; font-size: 14px; line-height: 17px; color: #dcdcdc; }
.delta { left: 74.100%; top: 29px; width: 310px; }
.delta span { margin-right: 22px; }
.ra { right: 21.500%; top: 76px; width: 135px; }
.rb { left: 88.010%; top: 76px; width: 136px; }
.lens { right: 8px; top: 7px; width: 32px; height: 34px; }
.plot > .xl { bottom: 2px; transform: translateX(-50%); font-size: 12px; line-height: 17px; color: #b4b4b4; }
.plot > .yl { right: 7px; transform: translateY(-50%); font-size: 13px; line-height: 17px; color: #d8d23c; }
.grip { width: 15px; display: flex; flex-direction: column; justify-content: center; align-items: center; gap: 5px; }
.grip i { width: 4px; height: 4px; border-radius: 50%; background: #ddd; }
.addnew { width: 146px; border: 1px solid #5a5654; border-right: 0; display: flex; flex-direction: column; padding: 0 7px; }
.addnew h3 { text-align: center; font-weight: 600; line-height: 20px; margin-bottom: 5px; }
.btns { display: grid; grid-template-columns: 61px 61px; gap: 9px; padding-bottom: 8px; border-bottom: 1px solid #666; }
.btns button, .foot button { height: 36px; border: 1px solid #6a625c; border-radius: 6px; background: linear-gradient(#3a3a3a, #262626); line-height: 16px; }
.foot { margin-top: auto; border-top: 1px solid #666; display: grid; grid-template-columns: 61px 61px; gap: 9px; padding: 7px 0 4px; }
.foot button { display: grid; place-items: center; }
.foot button.bare { border: 0; background: none; }
.foot svg { width: 26px; height: 26px; }
.foot svg.tr { width: 26px; height: 34px; }
.settings { height: 82px; display: flex; gap: 5px; padding: 4px 9px 0 3px; background: #2e2e2e; color: #1c1c1c; }
.ch { width: 87px; height: 77px; background: #cacaca; border-radius: 4px; overflow: hidden; padding: 0 7px; display: flex; flex-direction: column; }
.ch h4 { margin: 0 -7px 3px; padding: 0 5px; line-height: 19px; font-size: 15px; }
.ch p { line-height: 18px; }
.ch svg { height: 14px; margin: 1px 0 3px; }
.c1 h4 { background: #fff02f; } .c2 h4 { background: #1e4040; color: #35c0be; } .c3 h4 { background: #4a2328; color: #d84a62; }
.add { width: 39px; height: 77px; border: 1px solid #6a625c; border-radius: 5px; background: linear-gradient(#3a3a3a, #262626); color: #e4e4e4; line-height: 16px; padding-top: 6px; position: relative; }
.add::before { content: ""; position: absolute; left: 3px; right: 3px; top: 7px; height: 2px; background: #8cc63f; }
.four { margin-left: auto; margin-right: 4px; font-size: 18px; padding-top: 0; }
.math::before { background: #f58a1f; } .ref::before { background: #a9b0c4; } .bus::before { background: #b052f0; }
.bar { width: 1px; background: #555; margin: 0 4px 4px 0; }
.info { height: 77px; background: #c9c9c9; border-radius: 4px; overflow: hidden; margin-left: 4px; }
.info h4 { background: #5c5d61; color: #ececec; padding-left: 5px; line-height: 19px; font-size: 15px; margin-bottom: 3px; }
.info p { padding-left: 7px; line-height: 18px; }
.hor { width: 194px; } .trg { width: 156px; } .acq { width: 146px; }
.info dl { display: grid; grid-template-columns: 103px 1fr; padding-left: 7px; line-height: 18px; white-space: nowrap; }
.info dd svg { display: inline; width: 9px; height: 12px; }
.trg p { display: flex; align-items: center; gap: 10px; }
.trg b { width: 29px; height: 17px; line-height: 15px; text-align: center; font-weight: normal; background: #fff02f; border: 1px solid #555; border-radius: 5px; }
.trg svg { height: 12px; }
.acq span { margin-right: 20px; }
.state { width: 87px; margin-left: 4px; display: flex; flex-direction: column; justify-content: space-between; height: 77px; }
.state button { height: 34px; background: #10d410; color: #fff; border-radius: 4px; font-size: 12px; font-weight: 600; }
.state p { height: 36px; background: #cfcfcf; border-radius: 4px; text-align: center; line-height: 17px; }
```
FILE: app.js
```js
// Measured signals: read-only flag | name | value | address | comment. A leading "~" marks an enumeration value.
const signals = `R|DutyCycleU|20.00|0x6000EC98|MotCtrl_SVMOutputStruct_t.PwrStg_DutyCycles_af32[0]
R|DutyCycleV|20.00|0x6000EC9C|MotCtrl_SVMOutputStruct_t.PwrStg_DutyCycles_af32[0]
R|DutyCycleW|20.00|0x6000ECA0|MotCtrl_SVMOutputStruct_t.PwrStg_DutyCycles_af32[0]
|ECU_Identification_CalibData.HwNumber0|67|0x7002B1F8|
|ECU_Identification_CalibData.HwNumber1|49|0x7002B1F9|
|ECU_Identification_CalibData.HwNumber2|49|0x7002B1FA|
|ECU_Identification_CalibData.HwNumber3|32|0x7002B1FB|
|ECU_Identification_CalibData.HwVersion0|73|0x7002B1FC|
|ECU_Identification_CalibData.HwVersion1|50|0x7002B1FD|
|ECU_Identification_CalibData.HwVersion2|54|0x7002B1FE|
|ECU_Identification_CalibData.HwVersion3|32|0x7002B1FF|
|IF_DSR.dsr_mskSystemErrorStatus_mu32|0|0x70027D06|dsr_mskSystemErrorStatus_mu32
|IF_SSM.ssm_stBswRequest_mu8|~SSM_C_BSWREQUEST_RUN_CU8|0x70022CD0|IF_SSM.ssm_stBswRequest_mu8
|IF_SSM.ssm_stComm_mu8|~SSM_C_ST_COMM_OFF_U8|0x70028F83|Stub_IF_SSM_ssm_stComm_mu8
|IF_SSM.StubBypass|0|0x70022108|SSM_XCP_bypass
|IF_ZUL_BSW.bsw_stSystemZul_mu8|10|0x70022CCF|SSM_BswMode
|IF_ZUL_COD.bsw_numEcuPath_mu8|1|0x70028F54|NFS_IF_ZUL_COD_bsw_numEcuPath_mu8
|IF_ZUL_DCL.bsw_stUdcLink_mu8|0|0x70022A2E|DBT_stUdcLink_u8
|IF_ZUL_DCL.bsw_uDcLink_mf32|13.416000366210900|0x70022764|DBT_uDcLink_f32
|IF_ZUL_MPS.bsw_stphiMotorMech_mu8|15|0x6000F4E8|MOR_bsw_stPhiMotorMech_mu8
|IF_ZUL_VHC.bsw_uBatt_mf32|13.416000366210900|0x7002285C|MON_uBatt_f32
|Instrum.CAT2.FTTI_ErrorCreation_u8|~E_INSTRUM_FTTI_ERRORCREATION__NO_ERROR|0x70027F86|Instrum_FTTI_ErrorCreation_t
|Instrum.CAT2.FTTI_XCP_mor_stUstellNorm_u8|0|0x70028E66|Instrum_FTTI_XCP_mor_stUstellNorm_u8
|Instrum.CAT2.XCP_Id_u32|1952|0x700227E8|Instrum_XCP_Id_u32
|Instrum.CAT2.XCP_Instrum_hold_calib_Path1_u8|0|0x70022A9D|Instrum_hold_calib_Path1_u8
|Instrum.CAT2.XCP_Instrum_hold_calib_Path2_u8|0|0x70022A9E|Instrum_hold_calib_Path2_u8
|Instrum.CAT2.XCP_Instrum_hold_init_u8|0|0xB000FFFA|Instrum_hold_init_u8
|Instrum.CAT2.XCP_IpduData_au8_0|255|0x70022A82|Instrum_XCP_IpduData_au8
|Instrum.CAT2.XCP_IpduData_au8_1|144|0x70022A83|Instrum_XCP_IpduData_au8
|Instrum.CAT2.XCP_IpduData_au8_2|1|0x70022A84|Instrum_XCP_IpduData_au8
|Instrum.CAT2.XCP_IpduData_au8_3|40|0x70022A85|Instrum_XCP_IpduData_au8
|Instrum.CAT2.XCP_IpduData_au8_4|40|0x70022A86|Instrum_XCP_IpduData_au8
|Instrum.CAT2.XCP_IpduData_au8_5|40|0x70022A87|Instrum_XCP_IpduData_au8
|Instrum.CAT2.XCP_IpduData_au8_6|0|0x70022A88|Instrum_XCP_IpduData_au8
|Instrum.CAT2.XCP_IpduData_au8_7|0|0x70022A89|Instrum_XCP_IpduData_au8
|Instrum.CAT2.XCP_NewMessage_b|0|0x70022A8B|Instrum_XCP_NewMessage_b
R|mor_stUstellNorm_mu8|0|0x6000F4F8|Statussignal der Stell-Spannungen U/V/W
|PWRSTG_CalibData.CompensationAct|1|0x6000E923|PwrStg_Instrum_CompensationAct
R|PwrStgM_MainState|~PwrStgM_STA_POWERSTAGE_MAINMODETYPE_STA_POWERSTAGE_ON|0x7002AB97|
R|SAFEM_BLEM_S1_RSTM_SM_FAIL_ALRT_RESET_PWR_ERR_PIN_ERR_ID|2|0x70026554|SAFEM_BLEM_S1_RSTM_SM_FAIL_ALRT_RESET_PWR_ERR_PIN_ERR_ID
R|SAFEM_MOTCTRL_PWRSTG_CALIB_ERR_ID|0|0x6001B820|SAFEM_MOTCTRL_PWRSTG_CALIB_ERR_ID
R|StateM_State|~SCM_ACTIVE|0x700288A4|StateM_State_t
|STUB.SSM_XCP_bypass|0|0x70022108|SSM_XCP_bypass
|STUB.Stub_DSR_write|0|0x70022A34|Stub_DSR_write`.split('\n').map(l => l.split('|'));

document.getElementById('rows').innerHTML = signals.map(([ro, name, value, addr, comment]) => {
  const val = value[0] === '~'
    ? `<select class="val" aria-label="${name} value"><option>${value.slice(1)}</option></select>`
    : `<span class="val">${value}</span>`;
  const auto = name === 'PWRSTG_CalibData.CompensationAct' ? '' : 'checked';
  return `<tr class="${name.endsWith('NewMessage_b') ? 'hot' : ''}">
    <td><div><svg class="wv"><use href="#wave${ro ? 'r' : ''}"/></svg>${name}</div></td>
    <td><div class="${ro ? 'ro' : ''}">${val}<button class="dl" aria-label="Write ${name}"><svg><use href="#dl"/></svg></button></div></td>
    <td class="mid"><input type="checkbox" aria-label="Auto read ${name}" ${auto}></td>
    <td class="mid"><input type="checkbox" aria-label="Configured ${name}" checked disabled></td>
    <td>${addr}</td>
    <td><select class="poll" aria-label="Measurement ${name}"><option>Polling</option></select></td>
    <td>100</td><td>${comment}</td></tr>`;
}).join('');

// Task bar: icon and state
const apps = [['win'], ['find'], ['task'], ['files', 'run many'], ['hella'], ['snip', 'run'], ['oval'], ['oval'], ['kayak'],
  ['note'], ['panel', 'run many'], ['w', 'run'], ['meas', 'run'], ['flow', 'run'], ['npp', 'run'], ['pad', 'run many'],
  ['canoe', 'run'], ['edgeu', 'run focus'], ['edge', 'run'], ['gauge', 'run'], ['mon', 'run'], ['teams', 'run'],
  ['door', 'run many'], ['outlook', 'run alert'], ['photo', 'run']];
for (const bar of document.querySelectorAll('.apps')) {
  bar.innerHTML = apps.map(([icon, state = '']) =>
    `<button class="app ${state}" aria-label="${icon}"><svg><use href="#${icon === 'kayak' ? icon : 't-' + icon}"/></svg></button>`).join('');
}

// Scope graticule and traces, in plot units
const W = 1698, H = 911;
const line = (x1, y1, x2, y2, color, width, dash = '') =>
  `<line x1="${x1}" y1="${y1}" x2="${x2}" y2="${y2}" stroke="${color}" stroke-width="${width}" stroke-dasharray="${dash}"/>`;
let seed = 7;
const rnd = () => (seed = (seed * 16807) % 2147483647) / 2147483647;
const noise = (x1, x2, top, bottom, density, color) => {
  let d = '';
  for (let x = x1; x < x2; x++) if (rnd() < density) d += `M${x} ${top}V${bottom}`;
  return `<path d="${d}" stroke="${color}" stroke-width="1"/>`;
};
let g = '';
for (let i = 0; i < 10; i++) {
  const x = 30.5 + i * 169.6, y = 54.5 + i * 91;
  g += line(x, 17, x, 895, '#8a8a8a', 1, '1 17.2');
  g += line(30, y, W - 60, y, '#8a8a8a', 1, '1 32.92');
}
const Y = '#fdf018', C = '#1fb4b8', R = '#ee1c3c';
const rise = [369, 1333], fall = [531, 1494];
g += line(0, 239, 369, 239, Y, 4) + line(531, 236, 650, 236, Y, 4) + noise(650, 770, 234, 241, .7, Y) + line(650, 239, 1333, 239, Y, 4);
g += noise(1494, 1660, 234, 241, .65, Y) + line(1494, 236, 1580, 236, Y, 4) + line(1580, 239, 1698, 239, Y, 4);
g += noise(545, 640, 236, 241, .06, Y) + noise(40, 365, 236, 240, .02, Y);
g += line(38, 236.5, 1680, 236.5, '#b8b8b8', 1, '5 3');
for (const [a, b] of [[0, 369], [531, 1333], [1494, 1698]]) {
  g += line(a, 496, b, 496, C, 2) + noise(a, b, 491, 496, .5, C) + noise(a, b, 496, 499, .55, C);
}
g += line(0, 777, 369, 777, R, 4) + line(531, 774, 620, 774, R, 4) + noise(600, 730, 772, 779, .6, R) + line(640, 777, 1333, 777, R, 4);
g += line(1494, 774, 1560, 774, R, 4) + line(1550, 776, 1698, 776, R, 3) + noise(1550, 1698, 772, 779, .5, R);
rise.forEach((r, i) => {
  const f = fall[i];
  g += line(r, 148, r, 240, Y, 1) + line(f, 150, f, 244, Y, 1);
  g += line(r, 152, f, 152, Y, 4) + noise(r, r + 65 - i * 25, 151, 158, .8, Y) + noise(r + 40, r + 100, 151, 158, .3, Y);
  g += line(r, 395, r, 497, C, 1) + line(f, 402, f, 506, C, 1) + line(r, 402, f, 402, C, 5) + noise(r, f, 402, 408, .04, C);
  g += line(r, 689, r, 778, R, 1) + line(f, 690, f, 782, R, 1) + line(r, 694, r + 115, 694, R, 4) + line(r + 100, 690, f, 690, R, 4) + noise(r + 60, f, 688, 696, .45, R);
});
g += line(369, 38, 369, 893, '#9a9a9a', 1, '9 4');
g += line(1333.5, 20, 1333.5, H, '#f2f2f2', 1) + line(1494.5, 20, 1494.5, H, '#f2f2f2', 1);
g += line(1334, 98, 1494, 98, '#a01818', 2, '14 6');
for (const [x, y] of [[1334, 160], [1495, 149]]) {
  g += `<path d="M${x - 8} ${y - 8}l4 4M${x + 8} ${y - 8}l-4 4M${x - 8} ${y + 8}l4-4M${x + 8} ${y + 8}l-4-4" stroke="#bbb" stroke-width="2"/><circle cx="${x}" cy="${y}" r="4" fill="none" stroke="#bbb" stroke-width="2"/>`;
}
g += `<path d="M1676 235.500l14-9v6h8v6h-8v6z" fill="${Y}"/>`;
const plot = document.getElementById('scope');
plot.innerHTML = g;

const times = ['-17.6 µs', '-8.8 µs', '0 s', '8.8 µs', '17.6 µs', '26.4 µs', '35.2 µs', '44 µs', '52.8 µs', '61.6 µs'];
const volts = ['10 V', '5 V', '', '-5 V', '-10 V', '-15 V', '-20 V', '-25 V', '-30 V', '-35 V'];
plot.insertAdjacentHTML('afterend',
  times.map((t, i) => `<span class="xl" style="left:${(30.5 + i * 169.6) / W * 100}%">${t}</span>`).join('') +
  volts.map((v, i) => v && `<span class="yl" style="top:${(54.5 + i * 91) / H * 100}%">${v}</span>`).join(''));
```
